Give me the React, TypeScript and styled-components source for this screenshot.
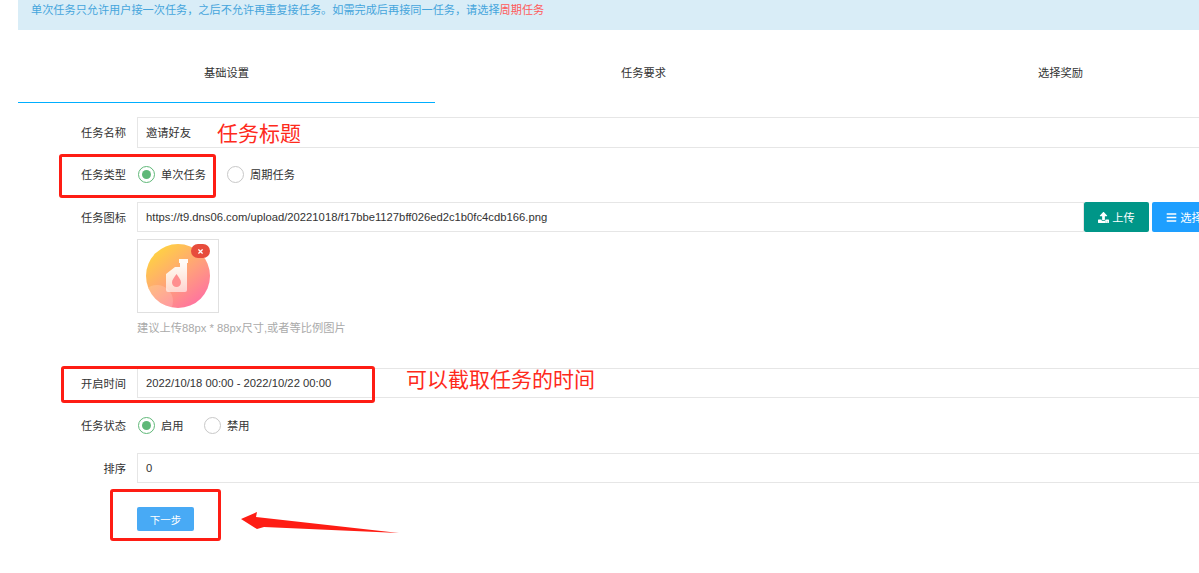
import React from 'react';
import styled, { createGlobalStyle } from 'styled-components';
import { FaUpload, FaBars, FaTimes } from 'react-icons/fa';

const Global = createGlobalStyle`
  html, body { margin: 0; padding: 0; background: #fff; overflow: hidden; }
  body { font-family: "Liberation Sans", "Noto Sans CJK SC", sans-serif; font-size: 11.25px; color: #333; }
`;

const Viewport = styled.div`
  position: relative;
  width: 1199px;
  height: 573px;
  overflow: hidden;
`;
const Page = styled.div`
  width: 1251px;
  margin-left: 18px;
`;
const Alert = styled.div`
  height: 30px;
  box-sizing: border-box;
  padding: 3px 13px 0;
  background: #d9edf7;
  color: #45a5dc;
  font-size: 11.17px;
  line-height: 14px;
`;
const Hot = styled.span`
  color: #ff5a5a;
`;
const Tabs = styled.div`
  display: flex;
  margin-top: 15px;
`;
const Tab = styled.div<{ $active?: boolean }>`
  flex: 1;
  height: 58px;
  box-sizing: border-box;
  padding-top: 21px;
  line-height: 14px;
  text-align: center;
  border-bottom: 1px solid ${p => (p.$active ? '#00aeff' : 'transparent')};
`;
const Form = styled.form`
  display: flex;
  flex-direction: column;
  padding-top: 14px;
`;
const Row = styled.div<{ $after: number }>`
  display: flex;
  align-items: center;
  min-height: 30px;
  margin-bottom: ${p => p.$after}px;
`;
const Label = styled.label<{ $tall?: boolean }>`
  width: 108px;
  margin-right: 11px;
  flex: none;
  text-align: right;
  padding-bottom: ${p => (p.$tall ? 2 : 0)}px;
`;
const Input = styled.div<{ $tall?: boolean }>`
  flex: 1;
  height: ${p => (p.$tall ? 31 : 30)}px;
  box-sizing: border-box;
  border: 1px solid #e6e6e6;
  padding: 0 0 ${p => (p.$tall ? 2 : 0)}px 8px;
  display: flex;
  align-items: center;
  color: #333;
`;
const UrlInput = styled(Input)`
  flex: none;
  width: 947px;
`;
const Btn = styled.button<{ $bg: string }>`
  flex: none;
  height: 30px;
  width: 65px;
  margin-left: ${p => (p.$bg === '#1e9fff' ? 3 : 0)}px;
  border: 0;
  border-radius: 2px;
  background: ${p => p.$bg};
  color: #fff;
  font: inherit;
  display: flex;
  align-items: center;
  justify-content: center;
  gap: 3px;
  padding: 0;
`;
const RadioGroup = styled.div`
  display: flex;
  align-items: center;
`;
const RadioItem = styled.span<{ $width: number }>`
  display: flex;
  align-items: center;
  width: ${p => p.$width}px;
  margin-left: 1px;
`;
const RadioMark = styled.i<{ $on?: boolean }>`
  flex: none;
  width: 17px;
  height: 17px;
  box-sizing: border-box;
  margin-right: 6px;
  border-radius: 50%;
  border: 1px solid ${p => (p.$on ? '#5fb878' : '#c8c8c8')};
  display: flex;
  align-items: center;
  justify-content: center;
  &::after {
    content: '';
    display: ${p => (p.$on ? 'block' : 'none')};
    width: 9px;
    height: 9px;
    border-radius: 50%;
    background: #5fb878;
  }
`;
const Indent = styled.div`
  margin-left: 119px;
`;
const Preview = styled.div`
  position: relative;
  width: 82px;
  height: 74px;
  box-sizing: border-box;
  border: 1px solid #e0e0e0;
  display: flex;
  align-items: center;
  justify-content: center;
`;
const Remove = styled.span`
  position: absolute;
  left: 53px;
  top: 4px;
  width: 19px;
  height: 14px;
  border-radius: 7px;
  background: #e74c3c;
  color: #fff;
  display: flex;
  align-items: center;
  justify-content: center;
`;
const Hint = styled.div`
  margin-top: 8px;
  margin-bottom: 33px;
  line-height: 14px;
  color: #aaa;
`;
const Next = styled.button`
  width: 57px;
  height: 24px;
  border: 0;
  border-radius: 2px;
  background: #48aaf5;
  color: #fff;
  font: inherit;
  font-size: 10.5px;
  padding: 0;
  display: block;
`;
const Mark = styled.div<{ $x: number; $y: number; $w: number; $h: number }>`
  position: absolute;
  left: ${p => p.$x}px;
  top: ${p => p.$y}px;
  width: ${p => p.$w}px;
  height: ${p => p.$h}px;
  box-sizing: border-box;
  border: 3px solid #fe1d14;
  border-radius: 3px;
`;
const Note = styled.div<{ $x: number; $y: number }>`
  position: absolute;
  left: ${p => p.$x}px;
  top: ${p => p.$y}px;
  color: #fe2a1c;
  font-family: "Noto Sans CJK SC", sans-serif;
  font-size: 21px;
  font-weight: 400;
  line-height: 28px;
  white-space: nowrap;
`;
const Arrow = styled.svg`
  position: absolute;
  left: 240px;
  top: 510px;
`;

const Bottle = () => (
  <svg width="66" height="66" viewBox="0 0 66 66">
    <defs>
      <linearGradient id="disc" x1="0.15" y1="0.05" x2="0.85" y2="0.95">
        <stop offset="0" stopColor="#ffd53f" />
        <stop offset="0.55" stopColor="#ff9f7c" />
        <stop offset="1" stopColor="#ff6fa3" />
      </linearGradient>
      <linearGradient id="flask" x1="0" y1="0" x2="0" y2="1">
        <stop offset="0" stopColor="#fff" stopOpacity="0.95" />
        <stop offset="1" stopColor="#fff" stopOpacity="0.6" />
      </linearGradient>
      <clipPath id="round"><circle cx="33" cy="33" r="32" /></clipPath>
    </defs>
    <circle cx="33" cy="33" r="32" fill="url(#disc)" />
    <circle cx="12" cy="58" r="16" fill="#fff" opacity="0.16" clipPath="url(#round)" />
    <path d="M34 16h9v4h-9z" fill="#fff" opacity="0.95" />
    <path d="M35 20h7v27a2 2 0 0 1-2 2H23a2 2 0 0 1-2-2V31l9-7h5z" fill="url(#flask)" />
    <path d="M31.500 31c2.500 3.500 4.500 6 4.500 8.500a4.500 4.500 0 0 1-9 0c0-2.500 2-5 4.500-8.500z" fill="#ff8f8f" />
  </svg>
);

export default function App() {
  return (
    <Viewport>
      <Global />
      <Page>
        <Alert>单次任务只允许用户接一次任务，之后不允许再重复接任务。如需完成后再接同一任务，请选择<Hot>周期任务</Hot></Alert>
        <Tabs>
          <Tab $active>基础设置</Tab>
          <Tab>任务要求</Tab>
          <Tab>选择奖励</Tab>
        </Tabs>
        <Form>
          <Row $after={11}>
            <Label $tall>任务名称</Label>
            <Input $tall>邀请好友</Input>
          </Row>
          <Row $after={13}>
            <Label>任务类型</Label>
            <RadioGroup>
              <RadioItem $width={88}><RadioMark $on />单次任务</RadioItem>
              <RadioItem $width={88}><RadioMark />周期任务</RadioItem>
            </RadioGroup>
          </Row>
          <Row $after={7}>
            <Label>任务图标</Label>
            <UrlInput>https://t9.dns06.com/upload/20221018/f17bbe1127bff026ed2c1b0fc4cdb166.png</UrlInput>
            <Btn type="button" $bg="#009688"><FaUpload size={11} />上传</Btn>
            <Btn type="button" $bg="#1e9fff"><FaBars size={11} />选择</Btn>
          </Row>
          <Indent>
            <Preview>
              <Bottle />
              <Remove><FaTimes size={7} /></Remove>
            </Preview>
            <Hint>建议上传88px * 88px尺寸,或者等比例图片</Hint>
          </Indent>
          <Row $after={12}>
            <Label>开启时间</Label>
            <Input>2022/10/18 00:00 - 2022/10/22 00:00</Input>
          </Row>
          <Row $after={13}>
            <Label>任务状态</Label>
            <RadioGroup>
              <RadioItem $width={65}><RadioMark $on />启用</RadioItem>
              <RadioItem $width={65}><RadioMark />禁用</RadioItem>
            </RadioGroup>
          </Row>
          <Row $after={24}>
            <Label>排序</Label>
            <Input>0</Input>
          </Row>
          <Indent>
            <Next type="button">下一步</Next>
          </Indent>
        </Form>
      </Page>
      <Mark $x={59} $y={154} $w={157} $h={44} />
      <Mark $x={61} $y={366} $w={314} $h={37} />
      <Mark $x={110} $y={489} $w={111} $h={52} />
      <Note $x={217} $y={118}>任务标题</Note>
      <Note $x={406} $y={364}>可以截取任务的时间</Note>
      <Arrow width="162" height="26" viewBox="0 0 162 26">
        <path d="M1 9L17 2L16 7L159 23L24 17L17 19z" fill="#fe1d14" />
      </Arrow>
    </Viewport>
  );
}
